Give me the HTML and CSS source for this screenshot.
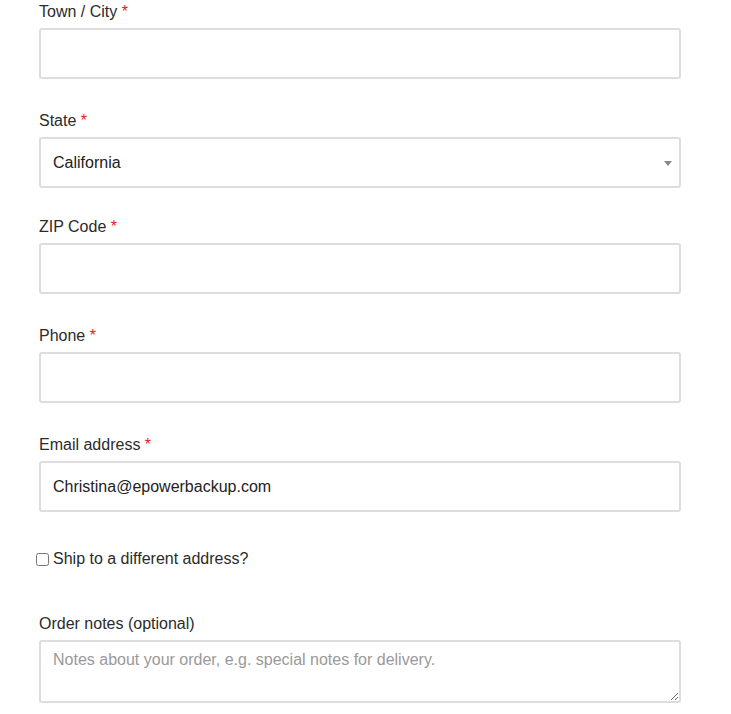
FILE: index.html
```html
<!DOCTYPE html>
<html>
<head>
<meta charset="utf-8">
<link rel="stylesheet" href="styles.css">
</head>
<body>
<form class="form">
  <div class="field">
    <label class="label">Town / City <span class="req">*</span></label>
    <input class="input" type="text">
  </div>
  <div class="field field-select">
    <label class="label">State <span class="req">*</span></label>
    <div class="select">
      <span class="select-value">California</span>
      <span class="select-arrow"></span>
    </div>
  </div>
  <div class="field">
    <label class="label">ZIP Code <span class="req">*</span></label>
    <input class="input" type="text">
  </div>
  <div class="field">
    <label class="label">Phone <span class="req">*</span></label>
    <input class="input" type="text">
  </div>
  <div class="field field-last">
    <label class="label">Email address <span class="req">*</span></label>
    <input class="input" type="text" value="Christina@epowerbackup.com">
  </div>
  <label class="check-row">
    <input class="check" type="checkbox">
    <span>Ship to a different address?</span>
  </label>
  <div class="field notes">
    <label class="label">Order notes (optional)</label>
    <textarea class="textarea" placeholder="Notes about your order, e.g. special notes for delivery."></textarea>
  </div>
</form>
</body>
</html>
```

FILE: styles.css
```css
html, body {
  margin: 0;
  padding: 0;
  background: #ffffff;
}
body {
  font-family: "Liberation Sans", Arial, sans-serif;
  font-size: 16px;
  line-height: 24px;
  color: #333333;
}
.form {
  width: 642px;
  margin: 0 0 0 39px;
  display: flex;
  flex-direction: column;
}
.field {
  display: flex;
  flex-direction: column;
  margin-bottom: 30px;
}
.field-select {
  margin-bottom: 27px;
}
.field-last {
  margin-bottom: 0;
}
.label {
  display: block;
  height: 24px;
  margin-bottom: 4px;
  color: #2b2b2b;
}
.req {
  color: #e0201c;
}
.input, .select, .textarea {
  box-sizing: border-box;
  width: 100%;
  border: 2px solid #dddddd;
  border-radius: 3px;
  background: #ffffff;
  font-family: "Liberation Sans", Arial, sans-serif;
  font-size: 16px;
  color: #222222;
  margin: 0;
  outline: none;
}
.input {
  height: 51px;
  padding: 0 12px;
}
.select {
  height: 51px;
  padding: 0 7px 0 12px;
  display: flex;
  align-items: center;
  justify-content: space-between;
}
.select-arrow {
  width: 0;
  height: 0;
  border-left: 4px solid transparent;
  border-right: 4px solid transparent;
  border-top: 5px solid #888888;
  margin-top: 2px;
}
.check-row {
  display: flex;
  align-items: center;
  height: 24px;
  margin-top: 35px;
  margin-left: -3px;
  color: #2b2b2b;
}
.check {
  width: 13px;
  height: 13px;
  margin: 0 4px 0 0;
}
.notes {
  margin-top: 41px;
  margin-bottom: 0;
}
.textarea {
  height: 63px;
  padding: 6px 12px;
  line-height: 24px;
  resize: vertical;
  display: block;
}
.textarea::placeholder {
  color: #999999;
}
```
